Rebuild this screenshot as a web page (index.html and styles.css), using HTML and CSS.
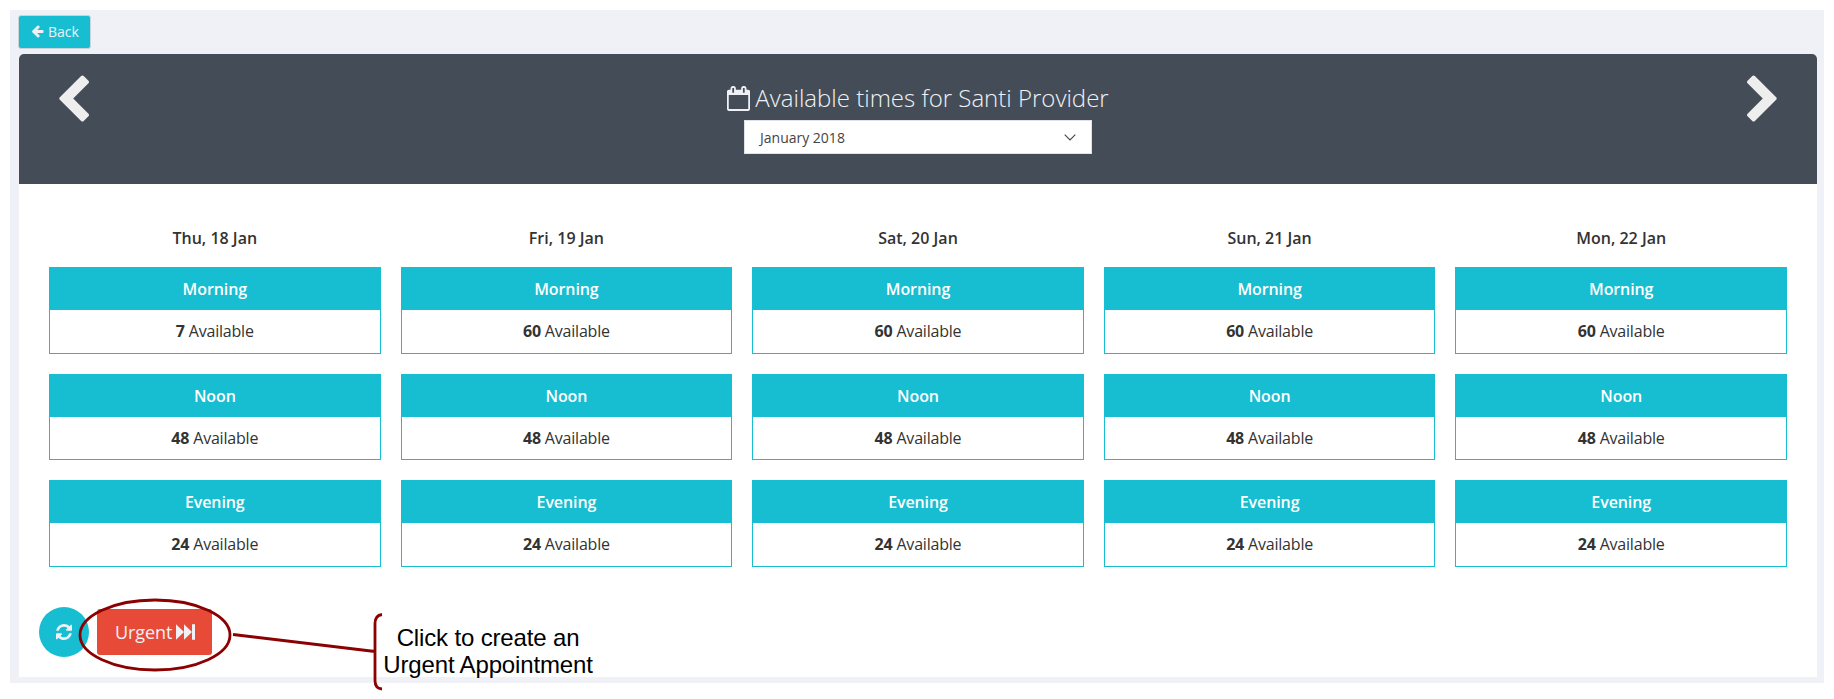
FILE: index.html
```html
<!DOCTYPE html>
<html lang="en">
<head>
<meta charset="utf-8">
<title>Available times</title>
<link rel="stylesheet" href="styles.css">
</head>
<body>
<main class="shell">
  <button class="back" type="button">
    <svg class="back-icon" viewBox="128 128 1536 1664"><path d="M1664 896v128q0 53-32.5 90.5t-84.5 37.5h-704l293 294q38 36 38 90t-38 90l-75 76q-37 37-90 37-52 0-91-37l-651-652q-37-37-37-90 0-52 37-91l651-650q38-38 91-38 52 0 90 38l75 74q38 38 38 91t-38 91l-293 293h704q52 0 84.5 37.5t32.5 90.5z"/></svg>
    <span>Back</span>
  </button>
  <section class="panel">
    <header class="panel-header">
      <svg class="chevron" viewBox="365 26 1081 1612"><path d="M1427 301l-531 531 531 531q19 19 19 45t-19 45l-166 166q-19 19-45 19t-45-19l-742-742q-19-19-19-45t19-45l742-742q19-19 45-19t45 19l166 166q19 19 19 45t-19 45z"/></svg>
      <div class="heading">
        <h1 class="title">
          <svg class="calendar" viewBox="64 0 1664 1792"><path d="M192 1664h1408v-1024h-1408v1024zm384-1216v-288q0-14-9-23t-23-9h-64q-14 0-23 9t-9 23v288q0 14 9 23t23 9h64q14 0 23-9t9-23zm768 0v-288q0-14-9-23t-23-9h-64q-14 0-23 9t-9 23v288q0 14 9 23t23 9h64q14 0 23-9t9-23zm384-64v1280q0 52-38 90t-90 38h-1408q-52 0-90-38t-38-90v-1280q0-52 38-90t90-38h128v-96q0-66 47-113t113-47h64q66 0 113 47t47 113v96h384v-96q0-66 47-113t113-47h64q66 0 113 47t47 113v96h128q52 0 90 38t38 90z"/></svg>
          <span>Available times for Santi Provider</span>
        </h1>
        <div class="select"><span>January 2018</span>
          <svg class="caret" viewBox="0 0 12 7"><path d="M.7.7 6 6 11.300 .7"/></svg>
        </div>
      </div>
      <svg class="chevron chevron-next" viewBox="365 26 1081 1612"><path d="M1427 301l-531 531 531 531q19 19 19 45t-19 45l-166 166q-19 19-45 19t-45-19l-742-742q-19-19-19-45t19-45l742-742q19-19 45-19t45 19l166 166q19 19 19 45t-19 45z"/></svg>
    </header>
    <div class="days">
      <div class="day">
        <h2 class="date">Thu, 18 Jan</h2>
        <div class="slot"><div class="period">Morning</div><div class="count"><b>7</b> Available</div></div>
        <div class="slot"><div class="period">Noon</div><div class="count"><b>48</b> Available</div></div>
        <div class="slot"><div class="period">Evening</div><div class="count"><b>24</b> Available</div></div>
      </div>
      <div class="day">
        <h2 class="date">Fri, 19 Jan</h2>
        <div class="slot"><div class="period">Morning</div><div class="count"><b>60</b> Available</div></div>
        <div class="slot"><div class="period">Noon</div><div class="count"><b>48</b> Available</div></div>
        <div class="slot"><div class="period">Evening</div><div class="count"><b>24</b> Available</div></div>
      </div>
      <div class="day">
        <h2 class="date">Sat, 20 Jan</h2>
        <div class="slot"><div class="period">Morning</div><div class="count"><b>60</b> Available</div></div>
        <div class="slot"><div class="period">Noon</div><div class="count"><b>48</b> Available</div></div>
        <div class="slot"><div class="period">Evening</div><div class="count"><b>24</b> Available</div></div>
      </div>
      <div class="day">
        <h2 class="date">Sun, 21 Jan</h2>
        <div class="slot"><div class="period">Morning</div><div class="count"><b>60</b> Available</div></div>
        <div class="slot"><div class="period">Noon</div><div class="count"><b>48</b> Available</div></div>
        <div class="slot"><div class="period">Evening</div><div class="count"><b>24</b> Available</div></div>
      </div>
      <div class="day">
        <h2 class="date">Mon, 22 Jan</h2>
        <div class="slot"><div class="period">Morning</div><div class="count"><b>60</b> Available</div></div>
        <div class="slot"><div class="period">Noon</div><div class="count"><b>48</b> Available</div></div>
        <div class="slot"><div class="period">Evening</div><div class="count"><b>24</b> Available</div></div>
      </div>
    </div>
    <footer class="actions">
      <button class="refresh" type="button" aria-label="Refresh">
        <svg class="refresh-icon" viewBox="128 128 1536 1536"><path d="M1639 1056q0 5-1 7-64 268-268 434.500t-478 166.500q-146 0-282.500-55t-243.500-157l-129 129q-19 19-45 19t-45-19-19-45v-448q0-26 19-45t45-19h448q26 0 45 19t19 45-19 45l-137 137q71 66 161 102t187 36q134 0 250-65t186-179q11-17 53-117 8-23 30-23h192q13 0 22.500 9.500t9.500 22.500zm25-800v448q0 26-19 45t-45 19h-448q-26 0-45-19t-19-45 19-45l138-138q-148-137-349-137-134 0-250 65t-186 179q-11 17-53 117-8 23-30 23h-199q-13 0-22.500-9.500t-9.500-22.500v-7q65-268 270-434.500t480-166.500q146 0 284 55.500t245 156.500l130-129q19-19 45-19t45 19 19 45z"/></svg>
      </button>
      <button class="urgent" type="button"><span>Urgent</span>
        <svg class="forward-icon" viewBox="0 0 19 16"><path d="M0 .3 8 8 0 15.700zM8 .3 16 8 8 15.700zM16 .3h3v15.400h-3z"/></svg>
      </button>
    </footer>
  </section>
</main>
<svg class="callout" viewBox="0 0 310 100">
  <ellipse cx="77" cy="40" rx="75" ry="35"/>
  <path d="M155 39.500 297 56.500M304 19.500q-7 1-7 9v57q0 8 7 8.500"/>
</svg>
<p class="callout-text">Click to create an<br>Urgent Appointment</p>
</body>
</html>
```
FILE: styles.css
```css
* { box-sizing: border-box; }

body {
  margin: 0;
  padding: 10px;
  height: 699px;
  overflow: hidden;
  background: #fff;
  color: #333;
  font-family: "Open Sans", sans-serif;
  font-size: 16px;
}

svg { display: block; fill: currentColor; }
button { font-family: inherit; }

.shell {
  width: 1814px;
  height: 673px;
  padding: 5px 7px 6px 9px;
  background: #f0f1f6;
}

.back {
  display: flex;
  align-items: center;
  gap: 4px;
  width: 73px;
  height: 34px;
  margin: 0 0 5px -1px;
  padding: 0 12px 1px;
  border: 1px solid #c9d5da;
  border-radius: 3px;
  background: #17bdd0;
  color: #f0f1f6;
  font-size: 14px;
}
.back-icon { width: 13px; height: 13px; flex: none; }

.panel {
  display: flex;
  flex-direction: column;
  height: 623px;
  border-radius: 5px 5px 0 0;
  background: #fff;
}

.panel-header {
  display: flex;
  justify-content: space-between;
  height: 130px;
  padding: 21px 39px 0;
  border-radius: 5px 5px 0 0;
  background: #444d57;
  color: #eee;
}
.chevron { width: 31px; height: 47px; }
.chevron-next { transform: scaleX(-1); }

.heading {
  display: flex;
  flex-direction: column;
  align-items: center;
  padding-top: 7px;
}
.title {
  display: flex;
  align-items: center;
  gap: 5px;
  height: 32px;
  margin: 0;
  color: #f0f1f6;
  font-size: 24px;
  font-weight: 300;
  white-space: nowrap;
}
.title span { padding-bottom: 2px; }
.calendar { width: 23px; height: 25px; }

.select {
  display: flex;
  align-items: center;
  justify-content: space-between;
  width: 348px;
  height: 34px;
  margin-top: 6px;
  padding: 0 15px;
  border: 1px solid #dfe2e8;
  background: #fff;
  color: #444;
  font-size: 14px;
}
.caret { width: 12px; height: 7px; fill: none; stroke: #444; stroke-width: 1.100; }

.days {
  display: grid;
  grid-template-columns: repeat(5, 1fr);
  gap: 20px;
  padding: 43px 30px 0;
}
.day { display: flex; flex-direction: column; gap: 20px; text-align: center; }
.date {
  height: 20px;
  margin: 0;
  font-size: 16px;
  font-weight: 600;
  line-height: 22px;
}
.slot { height: 86.670px; border: 1px solid #17bdd0; }
.period {
  height: 42px;
  background: #17bdd0;
  color: #fff;
  font-weight: 600;
  letter-spacing: -0.1px;
  line-height: 42px;
}
.count { letter-spacing: -0.2px; line-height: 42px; }
.slot:last-child .count { line-height: 43px; }

.actions {
  display: flex;
  align-items: center;
  gap: 8px;
  padding: 40px 20px 0;
}
.refresh {
  display: flex;
  align-items: center;
  justify-content: center;
  width: 50px;
  height: 50px;
  padding: 0;
  border: 0;
  border-radius: 50%;
  background: #17bdd0;
  color: #f0f1f6;
}
.refresh-icon { width: 16px; height: 16px; }
.urgent {
  display: flex;
  align-items: center;
  gap: 4px;
  width: 115px;
  height: 46px;
  padding: 0 17px 0 18px;
  border: 0;
  border-radius: 3px;
  background: #e84a38;
  color: #f0f1f6;
  font-size: 18px;
  letter-spacing: -0.1px;
}
.forward-icon { width: 19px; height: 16px; flex: none; }

/* Annotation drawn over the page */
.callout {
  position: absolute;
  left: 78px;
  top: 595px;
  width: 310px;
  height: 100px;
  fill: none;
  stroke: #8b0000;
  stroke-width: 2.800;
}
.callout-text {
  position: absolute;
  left: 382px;
  top: 624px;
  width: 212px;
  margin: 0;
  color: #000;
  font: 24px/27px "Liberation Sans", Arial, sans-serif;
  letter-spacing: -0.15px;
  text-align: center;
  white-space: nowrap;
}
```
